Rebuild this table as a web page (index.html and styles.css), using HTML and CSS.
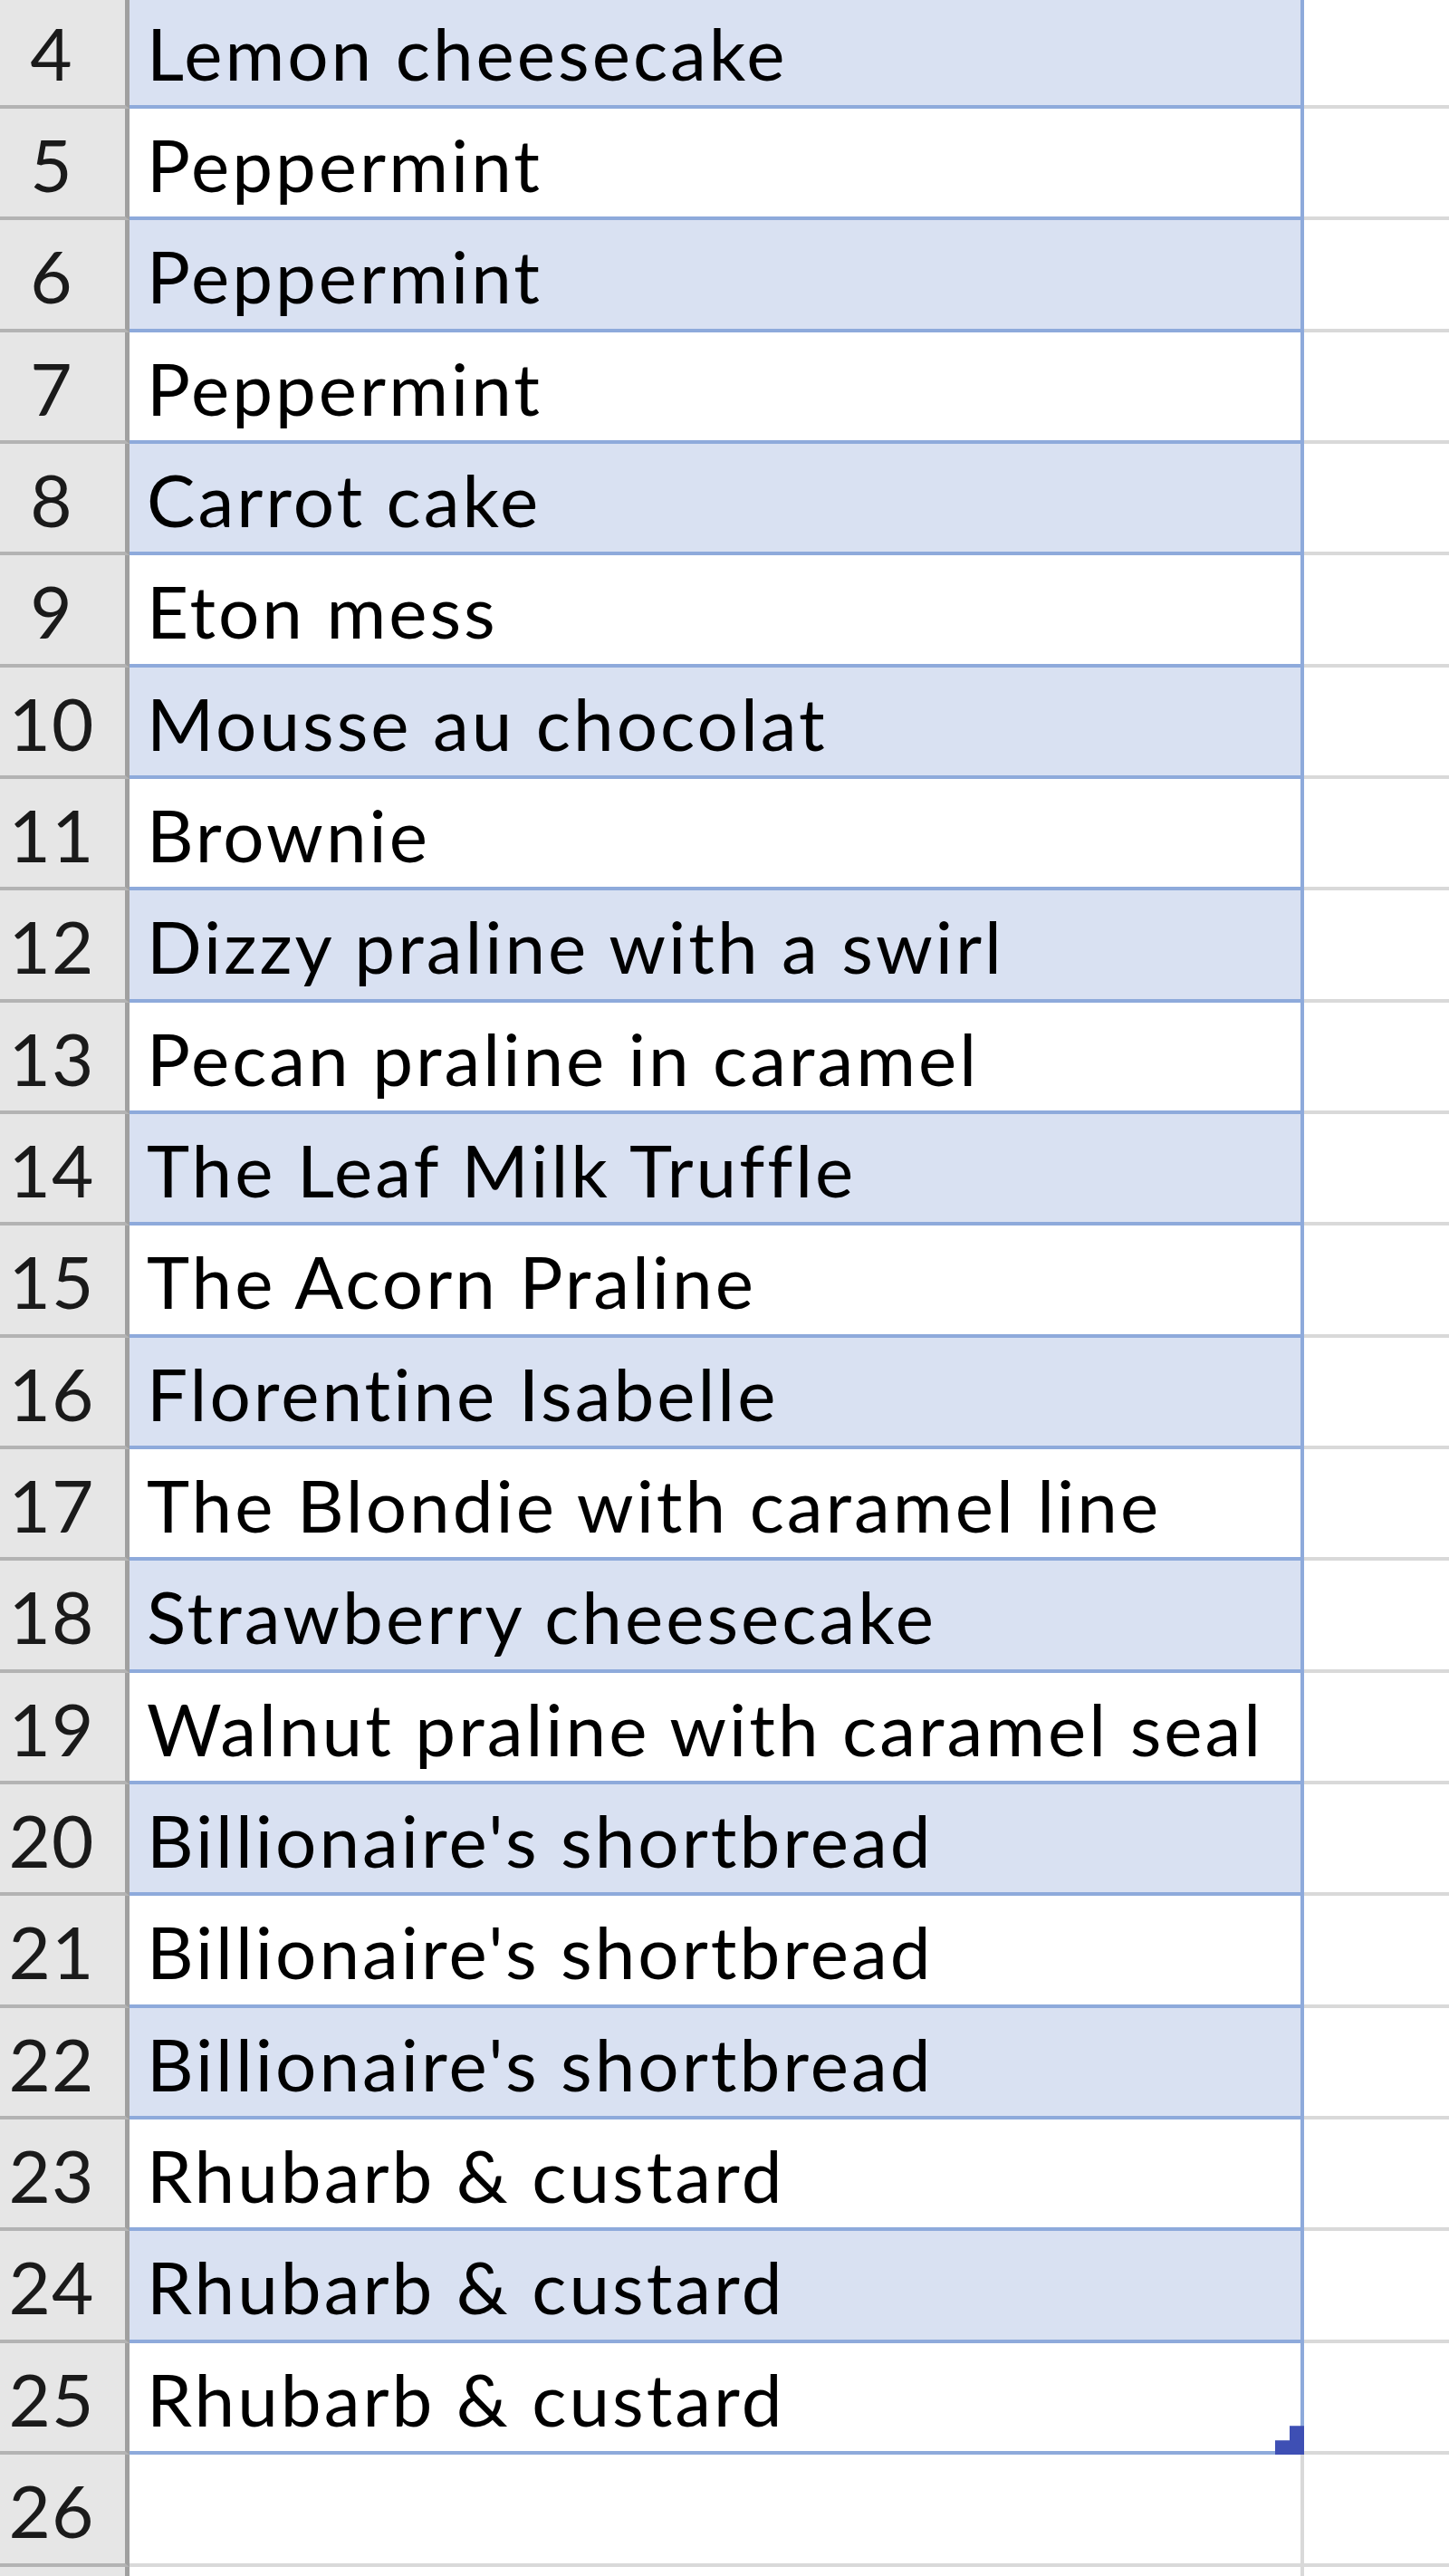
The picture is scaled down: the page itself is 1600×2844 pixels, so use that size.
FILE: index.html
```html
<!DOCTYPE html>
<html>
<head>
<meta charset="utf-8">
<link rel="stylesheet" href="styles.css">
</head>
<body>
<div class="sheet">
  <div class="row band"><div class="rh">4</div><div class="cell">Lemon cheesecake</div><div class="rest"></div></div>
  <div class="row"><div class="rh">5</div><div class="cell">Peppermint</div><div class="rest"></div></div>
  <div class="row band"><div class="rh">6</div><div class="cell">Peppermint</div><div class="rest"></div></div>
  <div class="row"><div class="rh">7</div><div class="cell">Peppermint</div><div class="rest"></div></div>
  <div class="row band"><div class="rh">8</div><div class="cell">Carrot cake</div><div class="rest"></div></div>
  <div class="row"><div class="rh">9</div><div class="cell">Eton mess</div><div class="rest"></div></div>
  <div class="row band"><div class="rh">10</div><div class="cell">Mousse au chocolat</div><div class="rest"></div></div>
  <div class="row"><div class="rh">11</div><div class="cell">Brownie</div><div class="rest"></div></div>
  <div class="row band"><div class="rh">12</div><div class="cell">Dizzy praline with a swirl</div><div class="rest"></div></div>
  <div class="row"><div class="rh">13</div><div class="cell">Pecan praline in caramel</div><div class="rest"></div></div>
  <div class="row band"><div class="rh">14</div><div class="cell">The Leaf Milk Truffle</div><div class="rest"></div></div>
  <div class="row"><div class="rh">15</div><div class="cell">The Acorn Praline</div><div class="rest"></div></div>
  <div class="row band"><div class="rh">16</div><div class="cell">Florentine Isabelle</div><div class="rest"></div></div>
  <div class="row"><div class="rh">17</div><div class="cell">The Blondie with caramel line</div><div class="rest"></div></div>
  <div class="row band"><div class="rh">18</div><div class="cell">Strawberry cheesecake</div><div class="rest"></div></div>
  <div class="row"><div class="rh">19</div><div class="cell">Walnut praline with caramel seal</div><div class="rest"></div></div>
  <div class="row band"><div class="rh">20</div><div class="cell">Billionaire's shortbread</div><div class="rest"></div></div>
  <div class="row"><div class="rh">21</div><div class="cell">Billionaire's shortbread</div><div class="rest"></div></div>
  <div class="row band"><div class="rh">22</div><div class="cell">Billionaire's shortbread</div><div class="rest"></div></div>
  <div class="row"><div class="rh">23</div><div class="cell">Rhubarb &amp; custard</div><div class="rest"></div></div>
  <div class="row band"><div class="rh">24</div><div class="cell">Rhubarb &amp; custard</div><div class="rest"></div></div>
  <div class="row last"><div class="rh">25</div><div class="cell">Rhubarb &amp; custard<span class="handle"></span></div><div class="rest"></div></div>
  <div class="row empty"><div class="rh">26</div><div class="cell"></div><div class="rest"></div></div>
  <div class="row empty"><div class="rh"></div><div class="cell"></div><div class="rest"></div></div>
</div>
</body>
</html>
```

FILE: styles.css
```css
html, body {
  margin: 0;
  padding: 0;
  background: #ffffff;
  overflow: hidden;
}

.sheet {
  margin-top: -3.4px;
  font-family: Lato, "Open Sans", sans-serif;
  font-size: 80px;
  color: #000000;
  font-variant-ligatures: none;
}

.row {
  display: flex;
  height: 123.35px;
  box-sizing: border-box;
}

.rh {
  flex: 0 0 143px;
  box-sizing: border-box;
  background: #e6e6e6;
  border-right: 5px solid #a0a0a0;
  border-bottom: 4px solid #b3b3b3;
  padding: 14px 24px 0 0;
  text-align: center;
  line-height: 95px;
  letter-spacing: 1px;
  color: #1a1a1a;
}

.cell {
  position: relative;
  flex: 0 0 1297px;
  box-sizing: border-box;
  padding: 14px 0 0 19px;
  line-height: 95px;
  letter-spacing: 3px;
  white-space: nowrap;
  border-right: 4px solid #8eaadb;
  border-bottom: 4px solid #8eaadb;
  background: #ffffff;
}

.band .cell {
  background: #d9e1f2;
}

.rest {
  flex: 1 1 auto;
  box-sizing: border-box;
  border-bottom: 4px solid #d9d9d9;
}

.empty .cell {
  border-right: 4px solid #d9d9d9;
  border-bottom: 4px solid #d9d9d9;
}

.handle {
  position: absolute;
  right: -4px;
  bottom: -4px;
  width: 32px;
  height: 32px;
  background: #3e4fb4;
  clip-path: polygon(50% 0, 100% 0, 100% 100%, 0 100%, 0 50%, 50% 50%);
}
```
